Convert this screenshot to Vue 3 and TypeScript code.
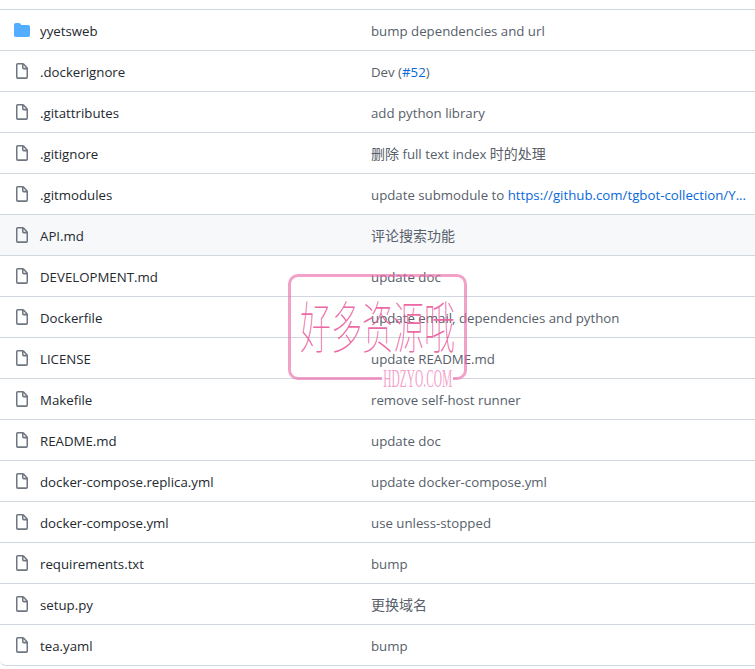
<template>
  <div class="page">
    <div class="file-list">
      <div v-for="row in rows" :key="row.name" class="row" :class="{ hovered: row.name === 'API.md' }">
        <div class="icon-cell">
          <svg v-if="row.dir" width="16" height="16" viewBox="0 0 16 16" class="folder">
            <path d="M1.75 1A1.75 1.75 0 0 0 0 2.75v10.5C0 14.216.784 15 1.75 15h12.5A1.75 1.75 0 0 0 16 13.25v-8.5A1.75 1.75 0 0 0 14.25 3H7.5a.25.25 0 0 1-.2-.1l-.9-1.2C6.07 1.26 5.55 1 5 1H1.75Z" />
          </svg>
          <svg v-else width="16" height="17" viewBox="0 0 16 16" preserveAspectRatio="none" class="file">
            <path fill-rule="evenodd" d="M3.75 1.5a.25.25 0 0 0-.25.25v11.5c0 .138.112.25.25.25h8.5a.25.25 0 0 0 .25-.25V6H9.75A1.75 1.75 0 0 1 8 4.25V1.5H3.75zm5.75.56v2.19c0 .138.112.25.25.25h2.19L9.5 2.06zM2 1.75C2 .784 2.784 0 3.75 0h5.086c.464 0 .909.184 1.237.513l3.414 3.414c.329.328.513.773.513 1.237v8.086A1.75 1.75 0 0 1 12.25 15h-8.5A1.75 1.75 0 0 1 2 13.25V1.75z" />
          </svg>
        </div>
        <div class="name">{{ row.name }}</div>
        <div class="message">
          <span v-for="(part, i) in splitCjk(row.message)" :key="i" :class="{ cjk: isCjk(part) }">{{ part }}</span>
          <a v-if="row.link" class="link">{{ row.link }}</a>
          <span v-if="row.after">{{ row.after }}</span>
        </div>
      </div>
    </div>

    <div class="watermark">
      <div class="stamp">
        <span class="stamp-text">好多资源哦</span>
      </div>
      <div class="stamp-gap">
        <span class="stamp-site">HDZYO.COM</span>
      </div>
    </div>
  </div>
</template>

<script setup lang="ts">
interface Row {
  name: string
  message: string
  dir?: boolean
  link?: string
  after?: string
}

const rows: Row[] = [
  { name: 'yyetsweb', message: 'bump dependencies and url', dir: true },
  { name: '.dockerignore', message: 'Dev (', link: '#52', after: ')' },
  { name: '.gitattributes', message: 'add python library' },
  { name: '.gitignore', message: '删除 full text index 时的处理' },
  { name: '.gitmodules', message: 'update submodule to ', link: 'https://github.com/tgbot-collection/Y...' },
  { name: 'API.md', message: '评论搜索功能' },
  { name: 'DEVELOPMENT.md', message: 'update doc' },
  { name: 'Dockerfile', message: 'update email, dependencies and python' },
  { name: 'LICENSE', message: 'update README.md' },
  { name: 'Makefile', message: 'remove self-host runner' },
  { name: 'README.md', message: 'update doc' },
  { name: 'docker-compose.replica.yml', message: 'update docker-compose.yml' },
  { name: 'docker-compose.yml', message: 'use unless-stopped' },
  { name: 'requirements.txt', message: 'bump' },
  { name: 'setup.py', message: '更换域名' },
  { name: 'tea.yaml', message: 'bump' }
]

const cjkRun = /([\u4e00-\u9fa5]+)/

function splitCjk(text: string): string[] {
  return text.split(cjkRun).filter((part) => part !== '')
}

function isCjk(part: string): boolean {
  return cjkRun.test(part)
}
</script>

<style>
html,
body {
  margin: 0;
  background: #fff;
  overflow: hidden;
}
</style>

<style scoped>
.page {
  position: relative;
  width: 755px;
  height: 669px;
  padding-top: 9px;
  box-sizing: border-box;
  overflow: hidden;
  font-family: "Open Sans", "Noto Sans CJK SC", sans-serif;
  font-size: 13.25px;
  line-height: 20px;
}
.file-list {
  border-top: 1px solid #d0d7de;
}
.row {
  display: flex;
  align-items: center;
  height: 40px;
  border-bottom: 1px solid #d0d7de;
}
.row:last-child {
  border-bottom-left-radius: 6px;
}
.hovered {
  background: #f6f8fa;
}
.icon-cell {
  width: 40px;
  padding-left: 14px;
  box-sizing: border-box;
  display: flex;
  flex-shrink: 0;
}
.folder {
  fill: #54aeff;
}
.file {
  fill: #6e7781;
}
.name {
  width: 331px;
  flex-shrink: 0;
  padding-top: 2px;
  color: #24292f;
}
.message {
  padding-top: 2px;
  color: #57606a;
  white-space: pre;
}
.cjk {
  font-size: 14px;
  line-height: 18px;
}
.link {
  color: #0969da;
}
.watermark {
  position: absolute;
  left: 288px;
  top: 274px;
  width: 180px;
  height: 116px;
  pointer-events: none;
}
.stamp {
  width: 179px;
  height: 106px;
  box-sizing: border-box;
  border: 3px solid rgba(235, 110, 170, 0.65);
  border-radius: 10px;
  display: flex;
  justify-content: center;
  align-items: center;
}
.stamp-text {
  font-family: "Noto Sans CJK SC", sans-serif;
  font-weight: 100;
  font-size: 31px;
  line-height: 40px;
  color: rgba(235, 95, 160, 0.95);
  white-space: nowrap;
  transform: scaleY(1.8);
  margin-top: -4px;
}
.stamp-gap {
  position: absolute;
  left: 94px;
  top: 95px;
  width: 71px;
  height: 20px;
  background: #fff;
}
.stamp-site {
  display: block;
  font-family: "Liberation Serif", serif;
  font-size: 26px;
  line-height: 20px;
  color: rgba(240, 130, 185, 0.75);
  transform: scaleX(0.44);
  transform-origin: left top;
  white-space: nowrap;
  padding-left: 3px;
}
</style>
